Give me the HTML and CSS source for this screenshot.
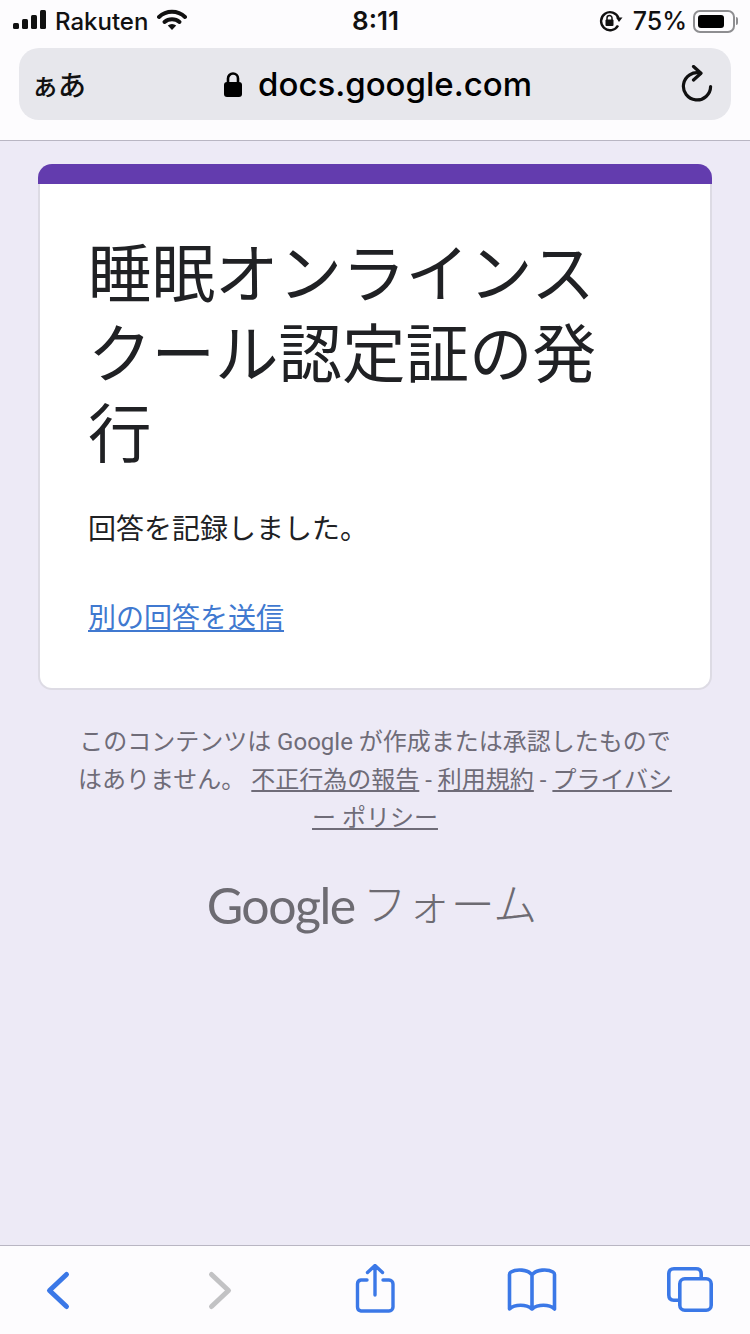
FILE: index.html
```html
<!DOCTYPE html>
<html lang="ja">
<head>
  <meta charset="UTF-8" />
  <title>睡眠オンラインスクール認定証の発行</title>
  <link rel="stylesheet" href="styles.css">
</head>
<body>

  <!-- Safari上部 -->
  <header class="top-bar">
    <div class="status-bar">
      <div class="status-left">
        <svg class="icon-signal" width="34" height="20" viewBox="0 0 34 20">
          <rect x="0" y="13" width="6" height="6" rx="1.5" fill="#111"/>
          <rect x="9" y="9" width="6" height="10" rx="1.5" fill="#111"/>
          <rect x="18" y="5" width="6" height="14" rx="1.5" fill="#111"/>
          <rect x="27" y="0" width="6" height="19" rx="1.5" fill="#111"/>
        </svg>
        <span class="carrier">Rakuten</span>
        <svg class="icon-wifi" width="30" height="22" viewBox="0 0 30 22">
          <path d="M2 8 A19 19 0 0 1 28 8" fill="none" stroke="#111" stroke-width="4" stroke-linecap="round"/>
          <path d="M7.5 13 A11.5 11.5 0 0 1 22.5 13" fill="none" stroke="#111" stroke-width="4" stroke-linecap="round"/>
          <path d="M15 21 L10.8 16.6 A6 6 0 0 1 19.2 16.6 Z" fill="#111"/>
        </svg>
      </div>
      <div class="status-time">8:11</div>
      <div class="status-right">
        <svg class="icon-rotation" width="24" height="22" viewBox="0 0 24 22">
          <path d="M19.5 8 A9 9 0 1 0 19 15.5" fill="none" stroke="#111" stroke-width="2.4"/>
          <path d="M17 7.5 L23.5 7.5 L20 12 Z" fill="#111"/>
          <rect x="6.5" y="9.5" width="8" height="6.5" rx="1" fill="#111"/>
          <path d="M8 10 V8 A2.5 2.5 0 0 1 13 8 V10" fill="none" stroke="#111" stroke-width="1.5"/>
        </svg>
        <span class="battery-text">75%</span>
        <div class="battery">
          <div class="battery-fill"></div>
        </div>
        <div class="battery-nub"></div>
      </div>
    </div>
    <div class="url-bar">
      <span class="url-aa">ぁあ</span>
      <div class="url-host">
        <svg width="18" height="26" viewBox="0 0 18 26">
          <path d="M4 12 V7.5 A5 5 0 0 1 14 7.5 V12" fill="none" stroke="#000" stroke-width="2.6"/>
          <rect x="0" y="11" width="18" height="15" rx="3" fill="#000"/>
        </svg>
        <span>docs.google.com</span>
      </div>
      <svg class="icon-reload" width="32" height="38" viewBox="0 0 32 38">
        <path d="M19.5 8.2 A13.6 13.6 0 1 0 29.6 21.5" fill="none" stroke="#111" stroke-width="3.2" stroke-linecap="round"/>
        <path d="M12.5 1.5 L20 8.2 L12.5 15" fill="none" stroke="#111" stroke-width="3.2" stroke-linecap="round" stroke-linejoin="round"/>
      </svg>
    </div>
  </header>

  <main class="content">
    <div class="card">
      <div class="card-bar"></div>
      <div class="card-body">
        <h1 class="form-title">睡眠オンラインスクール認定証の発行</h1>
        <p class="form-message">回答を記録しました。</p>
        <a class="form-link" href="#">別の回答を送信</a>
      </div>
    </div>

    <p class="disclaimer">このコンテンツは Google が作成または承認したものではありません。 <a href="#">不正行為の報告</a> - <a href="#">利用規約</a> - <a href="#">プライバシー ポリシー</a></p>

    <div class="forms-logo"><span class="logo-google">Google</span> <span class="logo-forms">フォーム</span></div>
  </main>

  <!-- Safari下部 -->
  <footer class="bottom-bar">
    <svg width="64" height="50" viewBox="0 0 64 50">
      <path d="M40.500 10.500 L23.500 26.500 L40.500 42.500" fill="none" stroke="#3b78e7" stroke-width="5" stroke-linecap="round" stroke-linejoin="round"/>
    </svg>
    <svg width="64" height="50" viewBox="0 0 64 50">
      <path d="M23.500 10.500 L40.500 26.500 L23.500 42.500" fill="none" stroke="#c2c2c4" stroke-width="5" stroke-linecap="round" stroke-linejoin="round"/>
    </svg>
    <svg width="64" height="50" viewBox="0 0 64 50">
      <path d="M24 16 H18 A4 4 0 0 0 14.500 20 V43 A4 4 0 0 0 18 47 H46 A4 4 0 0 0 50 43 V20 A4 4 0 0 0 46 16 H40" fill="none" stroke="#3b78e7" stroke-width="3.4" stroke-linecap="round"/>
      <path d="M32 31 V2 M24.500 8.500 L32 1.500 L39.500 8.500" fill="none" stroke="#3b78e7" stroke-width="3.4" stroke-linecap="round" stroke-linejoin="round"/>
    </svg>
    <svg width="64" height="50" viewBox="0 0 64 50">
      <path d="M32 11 C28 5 16 5 11 8 C9 9 9.500 10 9.500 12 V45 C15 40 26 40 32 45 C38 40 49 40 54.500 45 V12 C54.500 10 55 9 53 8 C48 5 36 5 32 11 Z M32 11 V44" fill="none" stroke="#3b78e7" stroke-width="3.6" stroke-linejoin="round"/>
    </svg>
    <svg width="64" height="50" viewBox="0 0 64 50">
      <rect x="21.800" y="14.800" width="31.400" height="31.400" rx="5" fill="none" stroke="#3b78e7" stroke-width="3.6"/>
      <path d="M21 36.200 H15.800 Q10.800 36.200 10.800 31 V10 Q10.800 4.800 16 4.800 H38 Q43.200 4.800 43.200 10 V14.800" fill="none" stroke="#3b78e7" stroke-width="3.6"/>
    </svg>
  </footer>

</body>
</html>
```

FILE: styles.css
```css
* {
  box-sizing: border-box;
}
body {
  margin: 0;
  height: 1334px;
  display: flex;
  flex-direction: column;
  overflow: hidden;
  background-color: #edeaf6;
  font-family: Inter, "Noto Sans CJK JP", sans-serif;
  color: #111;
}

/* Safari上部 */
.top-bar {
  height: 141px;
  background-color: #fdfcfe;
  border-bottom: 1px solid #b9b6c3;
}
.status-bar {
  height: 48px;
  padding: 8px 12px 0 13px;
  display: grid;
  grid-template-columns: 1fr auto 1fr;
  align-items: start;
}
.status-left {
  display: flex;
  align-items: center;
  height: 26px;
}
.icon-signal {
  margin-bottom: 3px;
}
.carrier {
  margin-left: 8px;
  font-size: 24px;
  font-weight: 500;
}
.icon-wifi {
  margin-left: 9px;
  margin-bottom: 2px;
}
.status-time {
  height: 26px;
  line-height: 26px;
  font-size: 26px;
  font-weight: 600;
}
.status-right {
  display: flex;
  align-items: center;
  justify-content: flex-end;
  height: 26px;
}
.battery-text {
  margin-left: 10px;
  font-size: 25px;
  font-weight: 500;
}
.battery {
  margin-left: 6px;
  width: 42px;
  height: 23px;
  padding: 3px;
  border: 2px solid #8e8e91;
  border-radius: 7px;
}
.battery-fill {
  width: 26px;
  height: 100%;
  background-color: #000;
  border-radius: 3px;
}
.battery-nub {
  margin-left: 1px;
  width: 2px;
  height: 8px;
  background-color: #8e8e91;
  border-radius: 0 2px 2px 0;
}
.url-bar {
  margin: 0 19px;
  height: 72px;
  padding: 0 18px 0 12px;
  display: flex;
  align-items: center;
  justify-content: space-between;
  background-color: #e7e7ec;
  border-radius: 20px;
}
.url-aa {
  font-size: 28px;
  font-weight: 500;
  letter-spacing: -1px;
}
.url-host {
  display: flex;
  align-items: center;
  gap: 16px;
  margin-right: 10px;
  font-size: 33px;
  font-weight: 500;
  color: #000;
}
.icon-reload {
  flex: none;
}

/* Inhalt */
.content {
  flex: 1;
  padding: 23px 38px 0;
}
.card-bar {
  height: 20px;
  background-color: #633cae;
  border-radius: 14px 14px 0 0;
}
.card-body {
  height: 506px;
  padding: 50px 48px 0;
  background-color: #fff;
  border: 2px solid #dddbe4;
  border-top: none;
  border-radius: 0 0 14px 14px;
}
.form-title {
  margin: 0;
  max-width: 530px;
  font-size: 63.5px;
  line-height: 80px;
  font-weight: 400;
  color: #202124;
}
.form-message {
  margin: 35px 0 0;
  font-size: 28px;
  line-height: 40px;
  color: #202124;
}
.form-link {
  display: inline-block;
  margin-top: 49px;
  font-size: 28px;
  line-height: 40px;
  color: #4079d0;
}
.disclaimer {
  margin: 33px 0 0;
  padding: 0 38px;
  text-align: center;
  font-family: Roboto, "Noto Sans CJK JP", sans-serif;
  font-size: 24px;
  line-height: 38px;
  line-break: loose;
  color: #6f6c78;
}
.disclaimer a {
  color: #6f6c78;
}
.forms-logo {
  margin-top: 36px;
  padding-right: 6px;
  display: flex;
  justify-content: center;
  align-items: center;
  gap: 8px;
  color: #6d6b72;
}
.logo-google {
  font-family: Lato, sans-serif;
  font-size: 50px;
  letter-spacing: -1.5px;
  line-height: 64px;
}
.logo-forms {
  font-size: 44px;
  line-height: 64px;
  font-weight: 300;
}

/* Safari unten */
.bottom-bar {
  height: 89px;
  padding: 18px 0 0 26px;
  display: grid;
  grid-template-columns: 162px 155px 157px 158px 64px;
  align-items: start;
  background-color: #fdfcfe;
  border-top: 1px solid #b9b6c3;
}
```
